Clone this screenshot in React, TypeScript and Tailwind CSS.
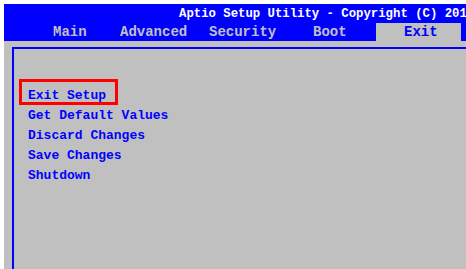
const TABS = [
  { label: "Main", w: "w-[67px]" },
  { label: "Advanced", w: "w-[89px]" },
  { label: "Security", w: "w-[104px]" },
  { label: "Boot", w: "w-[63px]" },
]

const ITEMS = ["Get Default Values", "Discard Changes", "Save Changes", "Shutdown"]

export default function App() {
  return (
    <div
      className="w-[466px] h-[269px] bg-white pl-[4px] pt-[4px] overflow-hidden flex flex-col font-bold"
      style={{ fontFamily: '"Liberation Mono", "DejaVu Sans Mono", monospace' }}
    >
      {/* Header */}
      <div className="bg-[#0000ff] h-[37px] flex flex-col shrink-0">
        <div className="h-[19px] pt-[2px] pl-[175px] text-[12.3px] leading-[17px] text-white whitespace-nowrap">
          Aptio Setup Utility - Copyright (C) 2011 American Megatrends, Inc.
        </div>
        <div className="h-[18px] flex pl-[49px] text-[14px] leading-[17px] whitespace-nowrap">
          {TABS.map((t) => (
            <div key={t.label} className={`${t.w} pt-[1px] text-[#c0c0c0]`}>
              {t.label}
            </div>
          ))}
          <div className="w-[85px] h-[18px] bg-[#c0c0c0] pt-[1px] pl-[28px] text-[#0000ff]">Exit</div>
        </div>
      </div>

      {/* Body */}
      <div className="flex-1 bg-[#c0c0c0] pt-[6px] pl-[8px] flex flex-col">
        <div className="flex-1 border-l-2 border-t-2 border-[#0000ff] pt-[30px] flex flex-col text-[13px] text-[#0000ff] whitespace-nowrap">
          <div className="ml-[5px] w-[99px] h-[26px] border-[3px] border-[#ff0000] pl-[6px] pt-[7px] leading-[14px]">
            Exit Setup
          </div>
          <div className="mt-[1px] flex flex-col pl-[14px] leading-[20px]">
            {ITEMS.map((item) => (
              <div key={item}>{item}</div>
            ))}
          </div>
        </div>
      </div>
    </div>
  )
}
